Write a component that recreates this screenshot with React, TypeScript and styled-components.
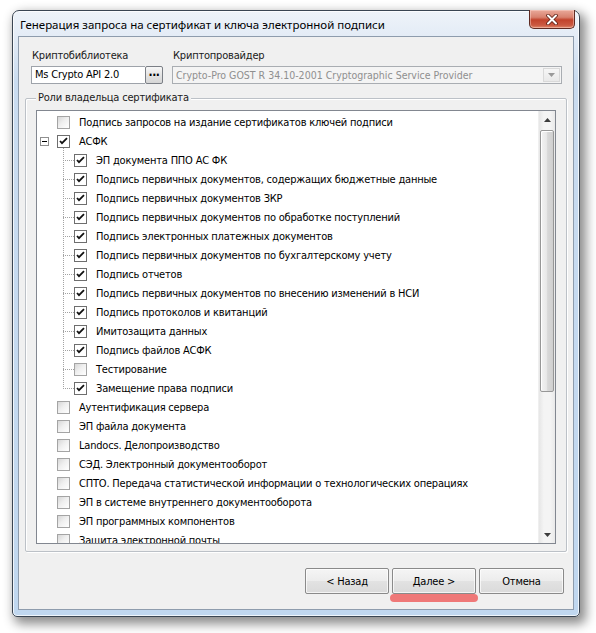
import React from "react";
import styled, { createGlobalStyle } from "styled-components";

const GlobalStyle = createGlobalStyle`
  html, body { margin: 0; padding: 0; background: #ffffff; }
  body {
    font-family: "DejaVu Sans Condensed", "Liberation Sans", Arial, sans-serif;
    font-size: 11px;
    letter-spacing: -0.2px;
    color: #000;
  }
  * { box-sizing: border-box; }
`;

const Page = styled.div`
  width: 596px;
  height: 633px;
  padding: 10px 0 0 12px;
  overflow: hidden;
`;

const Window = styled.div`
  width: 568px;
  height: 607px;
  border: 1px solid #3a4552;
  border-radius: 7px 7px 5px 5px;
  background: linear-gradient(
    to bottom,
    #eef3f9 0px,
    #e4ecf6 24px,
    #cadcf0 70px,
    #c0d7ef 100%
  );
  box-shadow: 4px 5px 11px 2px rgba(0, 0, 0, 0.45),
    inset 0 0 0 1px rgba(255, 255, 255, 0.75);
  display: flex;
  flex-direction: column;
`;

const TitleBar = styled.div`
  height: 25px;
  display: flex;
  align-items: flex-start;
  flex: none;
`;

const Title = styled.div`
  flex: 1;
  margin-top: 6px;
  padding-left: 7px;
  line-height: 16px;
  font-family: "Noto Sans", "Liberation Sans", sans-serif;
  font-size: 11.5px;
  letter-spacing: 0;
  color: #000;
`;

const CloseButton = styled.div`
  width: 46px;
  height: 19px;
  margin-top: -1px;
  margin-right: 4px;
  border: 1px solid #5e2a22;
  border-top: none;
  border-radius: 0 0 5px 5px;
  background: linear-gradient(
    to bottom,
    #e9a99a 0%,
    #d8826f 40%,
    #c2432c 55%,
    #cb5a42 85%,
    #e08a6d 100%
  );
  box-shadow: inset 0 0 0 1px rgba(255, 220, 210, 0.45);
  display: flex;
  align-items: center;
  justify-content: center;
`;

const Client = styled.div`
  flex: 1;
  margin: 0 5px 6px 5px;
  border: 1px solid #8e9cad;
  background: #f0f0f0;
  display: flex;
  flex-direction: column;
  padding-top: 12px;
`;

const FieldsRow = styled.div`
  display: flex;
  gap: 9px;
  padding-left: 12px;
`;

const FieldColumn = styled.div<{ $width: number }>`
  width: ${(p) => p.$width}px;
  display: flex;
  flex-direction: column;
  gap: 3px;
`;

const FieldLabel = styled.div`
  height: 14px;
  line-height: 14px;
  padding-left: 1px;
  color: #1a1a1a;
`;

const EditRow = styled.div`
  display: flex;
  height: 18px;
`;

const EditBox = styled.div`
  flex: 1;
  height: 18px;
  border: 1px solid #9ea3aa;
  border-right: none;
  background: #fff;
  line-height: 16px;
  padding-left: 3px;
  white-space: nowrap;
  overflow: hidden;
`;

const DotsButton = styled.div`
  width: 18px;
  height: 18px;
  border: 1px solid #7b7f86;
  border-radius: 2px;
  background: linear-gradient(to bottom, #f7f7f7, #e2e2e2 55%, #d6d6d6);
  display: flex;
  align-items: center;
  justify-content: center;
  font-weight: bold;
  font-size: 12px;
  letter-spacing: -0.5px;
  line-height: 1;
`;

const ComboBox = styled.div`
  height: 18px;
  border: 1px solid #a9adb2;
  background: #f4f4f4;
  display: flex;
  align-items: stretch;
`;

const ComboText = styled.div`
  flex: 1;
  padding-left: 3px;
  line-height: 16px;
  color: #8f8f8f;
  white-space: nowrap;
  overflow: hidden;
  font-size: 10.5px;
  letter-spacing: 0;
`;

const ComboArrow = styled.div`
  width: 17px;
  margin: 1px;
  border: 1px solid #d9d9d9;
  background: linear-gradient(to bottom, #f6f6f6, #e9e9e9);
  display: flex;
  align-items: center;
  justify-content: center;
`;

const GroupBox = styled.div`
  position: relative;
  margin: 14px 6px 0 6px;
  height: 454px;
  border: 1px solid #bcc1c7;
  border-radius: 2px;
  box-shadow: inset 1px 1px 0 #ffffff, 1px 1px 0 #ffffff;
  padding: 11px 10px 7px 10px;
  display: flex;
`;

const Legend = styled.div`
  position: absolute;
  top: -8px;
  left: 10px;
  padding: 0 2px;
  line-height: 14px;
  background: #f0f0f0;
  color: #1a1a1a;
`;

const TreeBox = styled.div`
  flex: 1;
  border: 1px solid #828790;
  background: #fff;
  display: flex;
  overflow: hidden;
`;

const TreeRows = styled.div`
  flex: 1;
  padding-top: 2px;
  overflow: hidden;
  display: flex;
  flex-direction: column;
`;

const Row = styled.div<{ $level: number }>`
  position: relative;
  flex: none;
  height: 19px;
  display: flex;
  align-items: center;
  padding-left: ${(p) => 20 + p.$level * 17}px;
  white-space: nowrap;

  ${(p) =>
    p.$level > 0
      ? `&::before {
    content: "";
    position: absolute;
    left: 26px;
    top: 9px;
    width: 11px;
    height: 1px;
    background: repeating-linear-gradient(to right, #a3a3a3 0 1px, transparent 1px 2px);
  }`
      : ""}
`;

const ChildGroup = styled.div`
  position: relative;
  display: flex;
  flex-direction: column;

  &::before {
    content: "";
    position: absolute;
    left: 26px;
    top: -3px;
    bottom: 9px;
    width: 1px;
    background: repeating-linear-gradient(to bottom, #a3a3a3 0 1px, transparent 1px 2px);
  }
`;

const Expander = styled.div`
  position: absolute;
  left: 3px;
  top: 5px;
  width: 9px;
  height: 9px;
  border: 1px solid #8f8f8f;
  background: #fff;
  display: flex;
  align-items: center;
  justify-content: center;

  &::after {
    content: "";
    width: 5px;
    height: 1px;
    background: #000;
  }
`;

const Check = styled.div<{ $checked: boolean }>`
  width: 13px;
  height: 13px;
  flex: none;
  border: 1px solid ${(p) => (p.$checked ? "#6e6e6e" : "#a4a4a4")};
  background: ${(p) =>
    p.$checked
      ? "#fff"
      : "linear-gradient(135deg, #d6d6d6 0%, #efefef 45%, #ffffff 100%)"};
  display: flex;
  align-items: center;
  justify-content: center;
`;

const RowText = styled.span`
  margin-left: 9px;
  line-height: 19px;
  color: #000;
`;

const ScrollBar = styled.div`
  width: 17px;
  flex: none;
  display: flex;
  flex-direction: column;
  background: linear-gradient(to right, #e6e6e6, #f4f4f4 30%, #f4f4f4 70%, #e9e9e9);
  border-left: 1px solid #efefef;
`;

const ScrollArrow = styled.div`
  height: 17px;
  flex: none;
  display: flex;
  align-items: center;
  justify-content: center;
`;

const ScrollTrack = styled.div`
  flex: 1;
  padding: 2px 1px 0 1px;
`;

const Thumb = styled.div`
  height: 262px;
  border: 1px solid #979797;
  border-radius: 2px;
  background: linear-gradient(
    to right,
    #f3f3f3 0%,
    #e9e9e9 45%,
    #d9d9d9 55%,
    #cfcfcf 100%
  );
  box-shadow: inset 1px 1px 0 #fff;
`;

const ButtonRow = styled.div`
  margin-top: 16px;
  display: flex;
  justify-content: flex-end;
  gap: 3px;
  padding-right: 9px;
`;

const ButtonSlot = styled.div<{ $marked?: boolean }>`
  position: relative;

  ${(p) =>
    p.$marked
      ? `&::after {
    content: "";
    position: absolute;
    left: -2px;
    right: -2px;
    bottom: -8px;
    height: 8px;
    border-radius: 4px;
    background: rgba(238, 86, 86, 0.78);
    filter: blur(0.6px);
  }`
      : ""}
`;

const Button = styled.div<{ $width: number }>`
  width: ${(p) => p.$width}px;
  height: 26px;
  border: 1px solid #8a8a8a;
  border-radius: 2px;
  background: linear-gradient(to bottom, #f5f5f5 0%, #ececec 50%, #e2e2e2 51%, #dadada 100%);
  box-shadow: inset 0 0 0 1px rgba(255, 255, 255, 0.7);
  display: flex;
  align-items: center;
  justify-content: center;
  color: #000;
`;

type TreeNode = { label: string; checked: boolean; children?: TreeNode[] };

const tree: TreeNode[] = [
  { label: "Подпись запросов на издание сертификатов ключей подписи", checked: false },
  {
    label: "АСФК",
    checked: true,
    children: [
      { label: "ЭП документа ППО АС ФК", checked: true },
      { label: "Подпись первичных документов, содержащих бюджетные данные", checked: true },
      { label: "Подпись первичных документов ЗКР", checked: true },
      { label: "Подпись первичных документов по обработке поступлений", checked: true },
      { label: "Подпись электронных платежных документов", checked: true },
      { label: "Подпись первичных документов по бухгалтерскому учету", checked: true },
      { label: "Подпись отчетов", checked: true },
      { label: "Подпись первичных документов по внесению изменений в НСИ", checked: true },
      { label: "Подпись протоколов и квитанций", checked: true },
      { label: "Имитозащита данных", checked: true },
      { label: "Подпись файлов АСФК", checked: true },
      { label: "Тестирование", checked: false },
      { label: "Замещение права подписи", checked: true },
    ],
  },
  { label: "Аутентификация сервера", checked: false },
  { label: "ЭП файла документа", checked: false },
  { label: "Landocs. Делопроизводство", checked: false },
  { label: "СЭД. Электронный документооборот", checked: false },
  { label: "СПТО. Передача статистической информации о технологических операциях", checked: false },
  { label: "ЭП в системе внутреннего документооборота", checked: false },
  { label: "ЭП программных компонентов", checked: false },
  { label: "Защита электронной почты", checked: false },
];

const CheckMark = () => (
  <svg width="9" height="9" viewBox="0 0 9 9">
    <path d="M1 4 L3 6.2 L8 1.2" fill="none" stroke="#111" strokeWidth="1.8" />
  </svg>
);

const TreeItem: React.FC<{ node: TreeNode; level: number }> = ({ node, level }) => (
  <>
    <Row $level={level}>
      {node.children && <Expander />}
      <Check $checked={node.checked}>{node.checked && <CheckMark />}</Check>
      <RowText>{node.label}</RowText>
    </Row>
    {node.children && (
      <ChildGroup>
        {node.children.map((c) => (
          <TreeItem key={c.label} node={c} level={level + 1} />
        ))}
      </ChildGroup>
    )}
  </>
);

const Triangle: React.FC<{ dir: "up" | "down"; color: string }> = ({ dir, color }) => (
  <svg width="7" height="4" viewBox="0 0 7 4">
    <polygon points={dir === "up" ? "0,4 7,4 3.5,0" : "0,0 7,0 3.5,4"} fill={color} />
  </svg>
);

export default function App() {
  return (
    <>
      <GlobalStyle />
      <Page>
        <Window>
          <TitleBar>
            <Title>Генерация запроса на сертификат и ключа электронной подписи</Title>
            <CloseButton>
              <svg width="12" height="11" viewBox="0 0 12 11">
                <path d="M2 1.5 L10 9.5 M10 1.5 L2 9.5" stroke="#5b1d12" strokeWidth="3.6" strokeLinecap="round" />
                <path d="M2 1.5 L10 9.5 M10 1.5 L2 9.5" stroke="#ffffff" strokeWidth="2" strokeLinecap="round" />
              </svg>
            </CloseButton>
          </TitleBar>
          <Client>
            <FieldsRow>
              <FieldColumn $width={132}>
                <FieldLabel>Криптобиблиотека</FieldLabel>
                <EditRow>
                  <EditBox>Ms Crypto API 2.0</EditBox>
                  <DotsButton>···</DotsButton>
                </EditRow>
              </FieldColumn>
              <FieldColumn $width={390}>
                <FieldLabel>Криптопровайдер</FieldLabel>
                <ComboBox>
                  <ComboText>Crypto-Pro GOST R 34.10-2001 Cryptographic Service Provider</ComboText>
                  <ComboArrow>
                    <Triangle dir="down" color="#9a9a9a" />
                  </ComboArrow>
                </ComboBox>
              </FieldColumn>
            </FieldsRow>
            <GroupBox>
              <Legend>Роли владельца сертификата</Legend>
              <TreeBox>
                <TreeRows>
                  {tree.map((n) => (
                    <TreeItem key={n.label} node={n} level={0} />
                  ))}
                </TreeRows>
                <ScrollBar>
                  <ScrollArrow>
                    <Triangle dir="up" color="#3c3c3c" />
                  </ScrollArrow>
                  <ScrollTrack>
                    <Thumb />
                  </ScrollTrack>
                  <ScrollArrow>
                    <Triangle dir="down" color="#3c3c3c" />
                  </ScrollArrow>
                </ScrollBar>
              </TreeBox>
            </GroupBox>
            <ButtonRow>
              <ButtonSlot>
                <Button $width={84}>&lt; Назад</Button>
              </ButtonSlot>
              <ButtonSlot $marked>
                <Button $width={84}>Далее &gt;</Button>
              </ButtonSlot>
              <ButtonSlot>
                <Button $width={85}>Отмена</Button>
              </ButtonSlot>
            </ButtonRow>
          </Client>
        </Window>
      </Page>
    </>
  );
}
